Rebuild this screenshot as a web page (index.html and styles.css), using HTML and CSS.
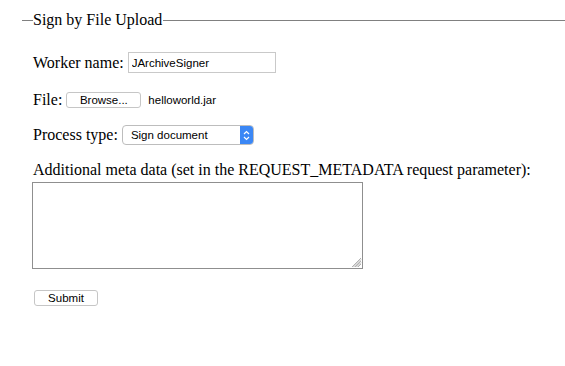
FILE: index.html
```html
<!DOCTYPE html>
<html lang="en">
<head>
    <meta charset="UTF-8">
    <meta name="viewport" content="width=device-width, initial-scale=1.0">
    <title>Sign by File Upload</title>
    <link rel="stylesheet" href="styles.css">
</head>
<body>

    <form class="upload-form" onsubmit="return false;">
        <fieldset class="box">
            <legend class="box-title">Sign by File Upload</legend>

            <!-- Worker -->
            <div class="row row-worker">
                <label for="workerName">Worker name:</label>
                <input class="text-field" type="text" id="workerName" value="JArchiveSigner">
            </div>

            <!-- File -->
            <div class="row row-file">
                <span>File:</span>
                <button class="small-button browse" type="button">Browse...</button>
                <span class="file-name">helloworld.jar</span>
            </div>

            <!-- Process type -->
            <div class="row row-process">
                <span>Process type:</span>
                <div class="select-box">
                    <span class="select-text">Sign document</span>
                    <span class="select-arrows">
                        <svg width="7" height="11" viewBox="0 0 7 11">
                            <path d="M1 4 L3.5 1.5 L6 4" fill="none" stroke="white" stroke-width="1.2"/>
                            <path d="M1 7 L3.5 9.5 L6 7" fill="none" stroke="white" stroke-width="1.2"/>
                        </svg>
                    </span>
                </div>
            </div>

            <!-- Meta data -->
            <div class="meta-label">Additional meta data (set in the REQUEST_METADATA request parameter):</div>
            <div class="meta-wrap">
                <textarea class="meta-area"></textarea>
                <svg class="grip" width="12" height="12" viewBox="0 0 12 12">
                    <path d="M11 2 L2 11 M11 5 L5 11 M11 8 L8 11 M11 3.5 L3.5 11 M11 6.5 L6.5 11" stroke="#a0a0a0" stroke-width="0.8"/>
                </svg>
            </div>

            <div class="submit-row">
                <button class="small-button submit" type="submit">Submit</button>
            </div>
        </fieldset>
    </form>

</body>
</html>
```

FILE: styles.css
```css
body {
    margin: 0;
    font-family: "Liberation Serif", "Times New Roman", serif;
    font-size: 16px;
    color: black;
    background-color: white;
}
.box {
    margin: 11px 0 0 22px;
    padding: 0 11px;
    border: none;
    border-top: 1px solid #808080;
    min-width: 0;
}
.box-title {
    padding: 0 1px 0 0;
    font-size: 16px;
    line-height: 18px;
}
.row {
    display: flex;
    align-items: center;
    gap: 4px;
    white-space: nowrap;
}
.row-worker {
    margin-top: 23px;
    height: 21px;
}
.row-file {
    margin-top: 19px;
    height: 16px;
}
.row-process {
    margin-top: 17px;
    height: 20px;
}
.text-field {
    width: 148px;
    height: 21px;
    box-sizing: border-box;
    border: 1px solid #c9c9c9;
    padding: 0 3px;
    margin: 0;
    font-family: "Liberation Sans", Arial, sans-serif;
    font-size: 11.5px;
    color: black;
    outline: none;
}
.small-button {
    height: 16px;
    box-sizing: border-box;
    border: 1px solid #c6c6c6;
    border-radius: 3px;
    background-color: white;
    font-family: "Liberation Sans", Arial, sans-serif;
    font-size: 11.5px;
    color: black;
    padding: 0;
    line-height: 14px;
    cursor: pointer;
}
.browse {
    width: 75px;
}
.file-name {
    margin-left: 3px;
    font-family: "Liberation Sans", Arial, sans-serif;
    font-size: 11.5px;
}
.select-box {
    display: flex;
    width: 132px;
    height: 20px;
    box-sizing: border-box;
    border: 1px solid #bdbdbd;
    border-radius: 4px;
    overflow: hidden;
    background-color: white;
}
.select-text {
    flex: 1;
    padding-left: 8px;
    font-family: "Liberation Sans", Arial, sans-serif;
    font-size: 11.5px;
    line-height: 18px;
}
.select-arrows {
    width: 13px;
    display: flex;
    align-items: center;
    justify-content: center;
    background-color: #3b87f5;
}
.meta-label {
    margin-top: 16px;
    line-height: 18px;
}
.meta-wrap {
    position: relative;
    width: 331px;
    margin: 3px 0 0 -1px;
}
.meta-area {
    display: block;
    width: 331px;
    height: 87px;
    box-sizing: border-box;
    border: 1px solid #8f8f8f;
    padding: 2px;
    resize: none;
    font-family: "Liberation Mono", monospace;
    font-size: 13px;
}
.grip {
    position: absolute;
    right: 1px;
    bottom: 1px;
}
.submit-row {
    margin-top: 19px;
}
.submit {
    width: 64px;
    margin-left: 1px;
}
```
